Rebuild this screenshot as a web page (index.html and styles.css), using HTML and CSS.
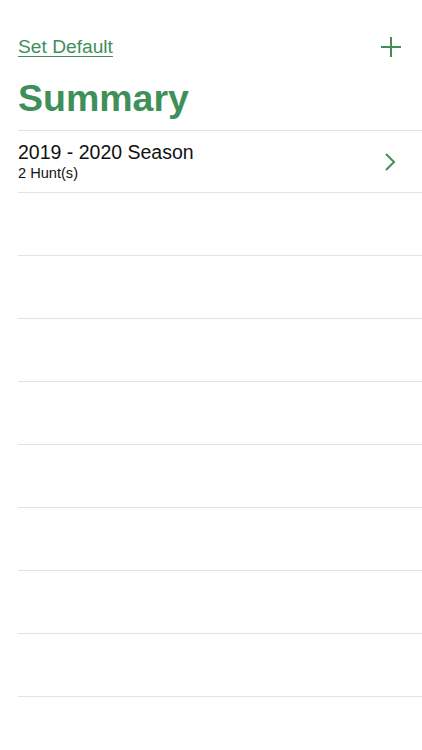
FILE: index.html
```html
<!DOCTYPE html>
<html lang="en">
<head>
    <meta charset="UTF-8">
    <meta name="viewport" content="width=device-width, initial-scale=1.0">
    <title>Summary</title>
    <link rel="stylesheet" href="styles.css">
</head>
<body>
    <div class="screen">
        <div class="nav-bar">
            <a class="nav-link" href="#">Set Default</a>
            <button class="add-btn" aria-label="Add">
                <svg width="22" height="22" viewBox="0 0 22 22">
                    <path d="M11 1 V21 M1 11 H21" stroke="#3f8f5a" stroke-width="2" fill="none"/>
                </svg>
            </button>
        </div>
        <h1 class="title">Summary</h1>
        <ul class="list">
            <li class="row">
                <div class="row-text">
                    <div class="row-title">2019 - 2020 Season</div>
                    <div class="row-sub">2 Hunt(s)</div>
                </div>
                <svg class="chevron" width="12" height="20" viewBox="0 0 12 20">
                    <path d="M2 2 L10 10 L2 18" stroke="#3f8f5a" stroke-width="2" fill="none"/>
                </svg>
            </li>
            <li class="row"></li>
            <li class="row"></li>
            <li class="row"></li>
            <li class="row"></li>
            <li class="row"></li>
            <li class="row"></li>
            <li class="row"></li>
            <li class="row"></li>
        </ul>
    </div>
</body>
</html>
```

FILE: styles.css
```css
* {
    margin: 0;
    padding: 0;
    box-sizing: border-box;
}

body {
    background: #ffffff;
    font-family: "Liberation Sans", Arial, sans-serif;
    color: #111111;
}

.screen {
    width: 422px;
    height: 750px;
    overflow: hidden;
}

.nav-bar {
    display: flex;
    justify-content: space-between;
    align-items: center;
    height: 44px;
    margin-top: 25px;
    padding: 0 20px 0 18px;
}

.nav-link {
    color: #3f8f5a;
    font-size: 19.2px;
    text-decoration: underline;
    text-underline-offset: 3px;
}

.add-btn {
    border: none;
    background: none;
    display: flex;
    align-items: center;
    cursor: pointer;
}

.title {
    color: #3f8f5a;
    font-size: 37.5px;
    font-weight: bold;
    line-height: 46px;
    padding-left: 18px;
    margin-top: 6px;
    margin-bottom: 9px;
}

.list {
    list-style: none;
    margin-left: 18px;
    border-top: 1px solid #e2e2e2;
}

.row {
    display: flex;
    align-items: center;
    justify-content: space-between;
    height: 63px;
    border-bottom: 1px solid #e2e2e2;
    padding-right: 26px;
}

.row:first-child {
    height: 62px;
}

.row-text {
    margin-top: -1px;
}

.row-title {
    font-size: 19.5px;
    line-height: 24px;
}

.row-sub {
    font-size: 14.6px;
    line-height: 19px;
}

.chevron {
    display: block;
}
```
